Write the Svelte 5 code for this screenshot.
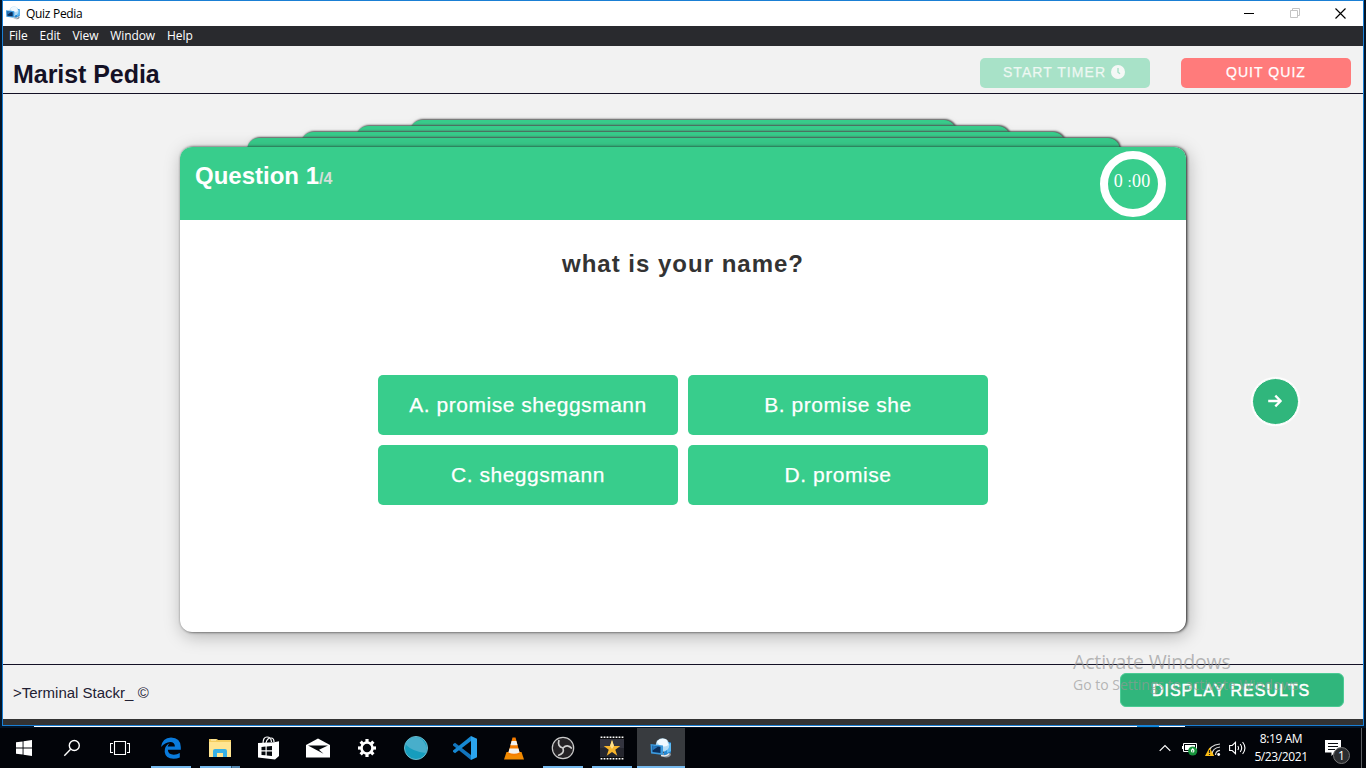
<script>
  const menus = ['File', 'Edit', 'View', 'Window', 'Help'];
  const tabs = [546, 654, 764, 873];
  const answers = ['A. promise sheggsmann', 'B. promise she', 'C. sheggsmann', 'D. promise'];
  const apps = [
    { id: 'edge', run: true },
    { id: 'files', run: true },
    { id: 'store' },
    { id: 'mail' },
    { id: 'gear' },
    { id: 'ball' },
    { id: 'code' },
    { id: 'vlc' },
    { id: 'obs', run: true },
    { id: 'star', run: true },
    { id: 'quiz', run: true, active: true }
  ];
  const teeth = [0, 45, 90, 135, 180, 225, 270, 315];
  const holes = [0, 1, 2, 3, 4, 5, 6, 7];
</script>

{#snippet logo(size)}
  <svg width={size} height={size} viewBox="0 0 24 24">
    <path d="M13 20q6 3.500 9-1l-1-3-8 1z" fill="#8d979f" />
    <path d="M14 5l8 1.500v10l-7 3z" fill="#2488d4" />
    <path d="M18 8l4-1v8l-4 2z" fill="#5cb8f2" />
    <circle cx="13.500" cy="9" r="6.800" fill="#b4dcf5" />
    <path d="M7.500 6q4-5 10-2.500l2 5.500q-5 3-9 0z" fill="#f0f9ff" />
    <path d="M1.500 8L14 9.500v9.500L2 17.500z" fill="#3b9ade" />
    <path d="M3.200 9.700l8.300 1v6.300l-8-1z" fill="#0b2f5c" />
    <path d="M3.200 9.700l6 .8-5.700 4z" fill="#2877bd" />
    <path d="M12 19.500q6 1.500 8-2" stroke="#e7ebee" stroke-width="1.300" fill="none" />
  </svg>
{/snippet}

<div class="desktop">
  <div class="window">
    <div class="titlebar">
      {@render logo(16)}
      <span class="title">Quiz Pedia</span>
      <div class="controls">
        <svg width="11" height="11" viewBox="0 0 11 11"><path d="M0 5.5h10" stroke="#000" /></svg>
        <svg width="11" height="11" viewBox="0 0 11 11"><path d="M.5 2.5h7v7h-7zM2.5 2.5v-2h7v7h-2" fill="none" stroke="#c4c4c4" /></svg>
        <svg width="11" height="11" viewBox="0 0 11 11"><path d="M.5.5l10 10M10.5.5l-10 10" stroke="#000" stroke-width="1.15" /></svg>
      </div>
    </div>
    <nav class="menu">
      {#each menus as m}<span>{m}</span>{/each}
    </nav>

    <header>
      <h1>Marist Pedia</h1>
      <div class="actions">
        <button class="start">START TIMER
          <svg width="14" height="14" viewBox="0 0 14 14"><circle cx="7" cy="7" r="7" fill="#f5f8f6" /><path d="M7 3v4.2l2 1.5" stroke="#a8e2c8" stroke-width="1.4" fill="none" /></svg>
        </button>
        <button class="quit">QUIT QUIZ</button>
      </div>
    </header>

    <main>
      <div class="stack">
        {#each tabs as w}<div class="tab" style="width:{w}px"></div>{/each}
        <section class="card">
          <div class="card-head">
            <h2>Question 1<small>/4</small></h2>
            <div class="timer">0 <i>:</i>00</div>
          </div>
          <h3>what is your name?</h3>
          <div class="answers">
            {#each answers as a}<button>{a}</button>{/each}
          </div>
        </section>
      </div>
      <button class="next" aria-label="Next">
        <svg width="16" height="16" viewBox="0 0 16 16"><path d="M1.2 8h12M8.3 2.6L13.7 8l-5.4 5.400" fill="none" stroke="#fff" stroke-width="2.3" stroke-linejoin="round" /></svg>
      </button>
    </main>

    <footer>
      <span>&gt;Terminal Stackr_ ©</span>
      <button class="results">DISPLAY RESULTS</button>
    </footer>
    <div class="strip"></div>
  </div>
  <div class="behind"><i></i></div>

  <div class="watermark">
    <div class="w1">Activate Windows</div>
    <div class="w2">Go to Settings to activate Windows.</div>
  </div>

  <div class="taskbar">
    <div class="cell">
      <svg width="16" height="16" viewBox="0 0 16 16" fill="#fff"><path d="M0 2.3L6.6 1.4V7.5H0zM7.5 1.2L16 0v7.5H7.5zM0 8.4h6.6v6.2L0 13.7zM7.5 8.4H16V16l-8.5-1.2z" /></svg>
    </div>
    <div class="cell">
      <svg width="18" height="18" viewBox="0 0 18 18" fill="none" stroke="#fff" stroke-width="1.4"><circle cx="11.3" cy="6.5" r="5" /><path d="M7.6 10.3L1.3 16.7" /></svg>
    </div>
    <div class="cell">
      <svg width="20" height="14" viewBox="0 0 20 14" fill="none" stroke="#fff" stroke-width="1.1"><path d="M4.5.5h11v13h-11zM3 2.5H.5v9H3M17 2.5h2.500v9H17" /></svg>
    </div>
    <div class="apps">
      {#each apps as app}
        <div class="cell" class:run={app.run} class:active={app.active} class:multi={app.id === 'files'}>
          {#if app.id === 'edge'}
            <svg width="22" height="22" viewBox="0 0 22 22"><path d="M1 10Q2.300 1 11 .6q9.600.5 9.800 9.400v2.800H7.800q.4 4.800 6 5 3.300 0 6-1.700v4.300q-2.800 1.400-6.300 1.400-8-.2-8.800-6.800Q4.200 9 9.600 6.200 7.900 8 7.700 9.500h7.200q0-4.500-4.700-4.600Q5 5.200 1 10z" fill="#0a7bdc" /></svg>
          {:else if app.id === 'files'}
            <svg width="22" height="20" viewBox="0 0 22 20"><path d="M0 1h8l1 1h13v17H0z" fill="#f3cd5f" /><path d="M0 4h22v15H0z" fill="#ffe591" /><path d="M2 1.500h5v1H2z" fill="#fff4c8" /><path d="M4 19v-6q0-2 2-2h10q2 0 2 2v6h-4v-4H8v4z" fill="#36b1e6" /></svg>
          {:else if app.id === 'store'}
            <svg width="22" height="24" viewBox="0 0 22 24"><path d="M5 7.500Q5 1 9 1t4.500 5M8 7q1-5 5-5 3 0 3 4" fill="none" stroke="#fff" stroke-width="1.2" /><path d="M0 7l16-.8 5-1V20l-4 3.600L0 21.500z" fill="#fff" /><path d="M3.500 11l4-.4v3.700h-4zM8.700 10.500l5.300-.5v4.300H8.700zM3.500 15.500h4v3.800l-4-.4zM8.700 15.500H14V20l-5.300-.6z" fill="#05080c" /></svg>
          {:else if app.id === 'mail'}
            <svg width="24" height="20" viewBox="0 0 24 20"><path d="M0 7L12 .5 24 7v12.500H0z" fill="#fff" /><path d="M2 7.500h20l-9 4.200 4.500 4z" fill="#05080c" /></svg>
          {:else if app.id === 'gear'}
            <svg width="20" height="20" viewBox="0 0 20 20"><circle cx="10" cy="10" r="5.500" fill="none" stroke="#fff" stroke-width="2.600" />{#each teeth as t}<path d="M8.400 1h3.200v3H8.400z" fill="#fff" transform="rotate({t} 10 10)" />{/each}</svg>
          {:else if app.id === 'ball'}
            <svg width="24" height="24" viewBox="0 0 24 24"><circle cx="12" cy="12" r="11.500" fill="#169dbd" stroke="#6cb9cb" /><path d="M1 8Q5 1 12 1t11 11l-1.300 5Q9 16 1 8z" fill="#48aecb" /></svg>
          {:else if app.id === 'code'}
            <svg width="24" height="24" viewBox="0 0 24 24"><path d="M0 8.300L2 6.700 18 19v5L0 9.500z" fill="#1275bd" /><path d="M0 15.700l2 1.600L18 5V0L0 14.500z" fill="#1688d2" /><path d="M18 0l6 2.700v18.600L18 24z" fill="#2ba4ee" /></svg>
          {:else if app.id === 'vlc'}
            <svg width="20" height="23" viewBox="0 0 20 23"><path d="M2.500 15h15l2.500 7.500H0z" fill="#f28a00" /><path d="M8.500.5h3L16 17q-6 3.500-12 0z" fill="#f57c00" /><path d="M7.600 4h4.800l1.200 4.200H6.400zM5.500 11.500h9l1.100 4q-5.600 2.500-11.200 0z" fill="#f1f1ee" /></svg>
          {:else if app.id === 'obs'}
            <svg width="24" height="24" viewBox="0 0 24 24"><circle cx="12" cy="12" r="10.700" fill="#242225" stroke="#c9c9c9" stroke-width="1.200" /><g fill="none" stroke="#cfcfcf" stroke-width="1.700"><path d="M12 12Q6 10.500 8 4" /><path d="M12 12Q6 10.500 8 4" transform="rotate(120 12 12)" /><path d="M12 12Q6 10.500 8 4" transform="rotate(240 12 12)" /></g></svg>
          {:else if app.id === 'star'}
            <svg width="24" height="24" viewBox="0 0 24 24"><path d="M0 0h24v24H0z" fill="#090a0c" /><path d="M0 3h24v18H0z" fill="#33343f" /><path d="M0 12h24v9H0z" fill="#25262e" />{#each holes as h}<path d="M{h * 3 + 0.600} .6h1.800v1.500h-1.800zM{h * 3 + 0.600} 21.900h1.800v1.500h-1.800z" fill="#fff" />{/each}<path d="M12 4l2 6h6.300l-5 3.700 2 6-5.300-3.700-5.300 3.700 2-6-5-3.700H10z" fill="#f7b52d" /><path d="M12 4l2 6-2 3-2-3z" fill="#ffe08a" /></svg>
          {:else}
            {@render logo(24)}
          {/if}
        </div>
      {/each}
    </div>
    <div class="tray">
      <svg width="12" height="8" viewBox="0 0 12 8"><path d="M.7 6.800L6 1.500l5.300 5.300" fill="none" stroke="#fff" stroke-width="1.200" /></svg>
      <svg class="bat" width="16" height="14" viewBox="0 0 16 14"><path d="M1.500 1.500h13v8h-13z" fill="none" stroke="#fff" /><path d="M0 4h1v3H0zM3 3h10v5H3z" fill="#fff" /><circle cx="10.700" cy="9" r="4.600" fill="#16933b" /><path d="M10.700 6q3.600 3 0 5.200-3.600-2.200 0-5.200z" fill="#fff" /><path d="M10.700 8v4.500" stroke="#16933b" stroke-width=".8" /></svg>
      <svg class="wifi" width="16" height="15" viewBox="0 0 16 15"><g fill="none" stroke="#ddd" stroke-width="1.200"><path d="M3.500 12Q4 3 15 2M7 13q0-7 8-8M10.500 13q.2-4 4.500-4.600" /></g><circle cx="13.700" cy="12.500" r="1.400" fill="#fff" /><path d="M4.500 5.500L9.200 14H0z" fill="#fcbd14" /><path d="M4.500 8v3M4.500 12v1" stroke="#222" stroke-width="1.200" /></svg>
      <svg class="sound" width="17" height="14" viewBox="0 0 17 14" fill="none" stroke="#fff" stroke-width="1.100"><path d="M.6 4.500h2.600L6.500 1.300v11.400L3.200 9.500H.6zM8.800 5q1.500 2 0 4M11.200 3q3 4 0 8M13.600 1q4.700 6 0 12" /></svg>
      <div class="clock"><div>8:19 AM</div><div>5/23/2021</div></div>
      <div class="notice">
        <svg width="16" height="16" viewBox="0 0 16 16"><path d="M0 0h16v12.500H9.500L6.500 16v-3.500H0z" fill="#fff" /><path d="M3 3.500h10M3 6.500h10M3 9.500h7" stroke="#080b0f" /></svg>
        <b>1</b>
      </div>
    </div>
  </div>
</div>

<style>
  :global(body) { margin: 0; overflow: hidden; }
  .desktop {
    position: relative; width: 1366px; height: 768px; overflow: hidden;
    display: flex; flex-direction: column;
    background: #031528; font-family: "Liberation Sans", Arial, sans-serif;
  }
  button { border: 0; padding: 0; margin: 0; font-family: inherit; color: #fff; box-sizing: border-box; }
  svg { display: block; flex: none; }
  .window {
    box-sizing: border-box; width: 1362px; height: 726px; margin-left: 2px;
    border: 1px solid #1a7fd4; display: flex; flex-direction: column; background: #f2f2f2;
  }
  .titlebar { height: 25px; background: #fff; display: flex; align-items: center; padding: 0 17px 1px 2px; box-sizing: border-box; }
  .title { margin-left: 5px; font: 12px "Open Sans", sans-serif; letter-spacing: -.3px; color: #000; }
  .controls { margin-left: auto; display: flex; gap: 34.5px; }
  .menu {
    height: 20px; background: #292a2e; color: #fff; display: flex; align-items: center; gap: 12px;
    padding: 0 0 2px 6px; box-sizing: border-box; font: 12px "Open Sans", sans-serif; letter-spacing: -.1px;
  }
  header {
    box-sizing: border-box; height: 48px; border-bottom: 1px solid #141126; display: flex;
    justify-content: space-between; padding: 0 12px 0 10px;
  }
  h1 { margin: 13px 0 0; font-size: 25px; line-height: 30px; color: #141126; letter-spacing: -.05px; }
  .actions { display: flex; gap: 31px; padding-top: 12px; }
  .actions button {
    width: 170px; height: 30px; border-radius: 5px; font-size: 14px; letter-spacing: 1.05px;
    display: flex; align-items: center; justify-content: center; padding-bottom: 2px;
    -webkit-text-stroke: .25px currentColor;
  }
  .actions .start { background: #a8e2c8; color: #eef8f3; gap: 5px; padding-right: 2px; }
  .actions .quit { background: #ff7b7b; }
  main { position: relative; height: 570px; padding: 26px 0 0 177px; box-sizing: border-box; }
  .stack { width: 1006px; display: flex; flex-direction: column; align-items: center; }
  .tab {
    height: 26px; margin-bottom: -20px; border-radius: 12px 12px 0 0; position: relative;
    background: #38cd8c; box-shadow: 1px -1px 2px #555, 0 0 10px rgba(0, 0, 0, .05); flex: none;
  }
  .card {
    position: relative; width: 1006px; height: 485px; margin-top: 3px; border-radius: 12px; background: #fff;
    box-shadow: 1px 0 3px #222, 2px 4px 18px rgba(0, 0, 0, .27);
    display: flex; flex-direction: column; align-items: center;
  }
  .card-head {
    align-self: stretch; height: 73px; background: #38cd8c; border-radius: 12px 12px 0 0;
    display: flex; justify-content: space-between; box-sizing: border-box; padding: 4px 20px 0 15px;
  }
  h2 { margin: 11px 0 0; font-size: 24px; line-height: 28px; color: #fff; }
  small { font-size: 16px; color: #d3dfd9; }
  .timer {
    box-sizing: border-box; width: 66px; height: 66px; border: 8px solid #fff; border-radius: 50%;
    color: #fff; font: 18px/44px "Liberation Serif", serif; text-align: center; white-space: nowrap;
    letter-spacing: .2px; padding-right: 2px;
  }
  .timer i { font-style: normal; font-size: 15px; }
  h3 { margin: 29px 0 0; font-size: 24px; line-height: 30px; letter-spacing: 1px; color: #333; }
  .answers { margin-top: 96px; display: grid; grid-template-columns: 300px 300px; gap: 10px; }
  .answers button {
    height: 60px; border-radius: 5px; background: #38cd8c; font-size: 21px; letter-spacing: .53px;
    -webkit-text-stroke: .25px #fff;
  }
  .next {
    position: absolute; left: 1249px; top: 284px; width: 47px; height: 47px; border-radius: 50%;
    border: 1px solid #fff; background: #30b67c; box-shadow: 0 0 1px 1px #fff;
    display: flex; align-items: center; justify-content: center; padding: 0 1px 1px 0;
  }
  footer {
    box-sizing: border-box; height: 55px; border-top: 1px solid #141126; background: #f1f1f1;
    display: flex; justify-content: space-between; padding: 8px 19px 0 10px; color: #222033;
    font-size: 15px; line-height: 39px;
  }
  .results {
    width: 224px; height: 34px; border-radius: 6px; background: #30b67c; border: 1px solid #4bcb94;
    font-size: 16px; letter-spacing: 1px; padding: 1px 2px 0 0; -webkit-text-stroke: .5px #fff;
  }
  .strip { height: 6px; background: #333; }
  .behind { height: 1px; width: 1151px; margin: 0 0 1px 34px; background: #fff; flex: none; display: flex; }
  .behind i { width: 22px; margin-left: 1103px; background: #0c87d8; }
  .watermark {
    position: absolute; left: 1073px; top: 649px; color: rgba(150, 150, 150, .68);
    font-family: "Open Sans", sans-serif; white-space: nowrap;
  }
  .w1 { font-size: 19.5px; line-height: 25px; letter-spacing: -.15px; }
  .w2 { font-size: 14px; line-height: 20px; letter-spacing: 0; padding-top: 1px; }
  .taskbar { height: 40px; background: #020409; display: flex; }
  .cell {
    box-sizing: border-box; width: 48px; height: 40px; display: flex; align-items: center; justify-content: center; position: relative;
  }
  .apps { display: flex; gap: 1px; margin-left: 3px; }
  .run::after { content: ""; position: absolute; left: 4px; right: 4px; bottom: 0; height: 2px; background: #76b9ed; }
  .multi::after { background: linear-gradient(90deg, #76b9ed 31px, #31536f 31px 32px, #5587af 32px); }
  .active { background: #383b3f; }
  .active::after { left: 0; right: 0; }
  .tray {
    margin-left: auto; width: 207px; box-sizing: border-box; display: flex; align-items: center;
    border-right: 1px solid #5b5e62; margin-right: 4px;
  }
  .tray > svg:first-child { margin-left: 4px; }
  .bat { margin-left: 11px; margin-top: 2px; }
  .wifi { margin-left: 7px; margin-top: 2px; }
  .sound { margin-left: 8px; }
  .clock {
    width: 62px; margin-left: 4px; color: #fff; text-align: center; white-space: nowrap;
    font: 12px/18px "Open Sans", sans-serif; letter-spacing: -.4px; padding-bottom: 1px;
  }
  .notice { position: relative; margin-left: 13px; }
  .notice b {
    position: absolute; left: 8px; top: 7px; width: 15px; height: 15px; border: 1px solid #777; border-radius: 50%;
    background: #2b2d30; color: #fff; font: 12px/15px "Open Sans", sans-serif; text-align: center;
  }
</style>
